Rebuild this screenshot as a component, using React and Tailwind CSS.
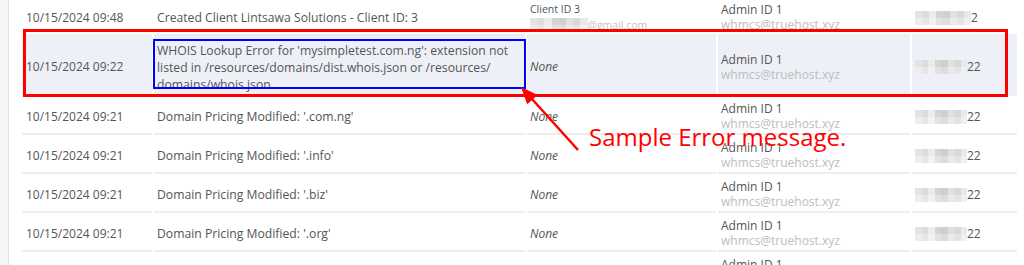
import React from 'react';

const ROWS = [
  { date: '10/15/2024 09:48', desc: ['Created Client Lintsawa Solutions - Client ID: 3'], client: true, tail: '2' },
  {
    date: '10/15/2024 09:22',
    desc: [
      "WHOIS Lookup Error for 'mysimpletest.com.ng': extension not",
      'listed in /resources/domains/dist.whois.json or /resources/',
      'domains/whois.json',
    ],
    active: true,
    tail: '22',
  },
  { date: '10/15/2024 09:21', desc: ["Domain Pricing Modified: '.com.ng'"], tail: '22' },
  { date: '10/15/2024 09:21', desc: ["Domain Pricing Modified: '.info'"], tail: '22' },
  { date: '10/15/2024 09:21', desc: ["Domain Pricing Modified: '.biz'"], tail: '22' },
  { date: '10/15/2024 09:21', desc: ["Domain Pricing Modified: '.org'"], tail: '22' },
  // next row is only peeking in at the bottom edge
  { date: '', desc: [], none: false, tail: '' },
];

const SHADES = [
  ['#e4e4e4', '#dcdcdc', '#ececec', '#d4d4d4', '#cfcfcf', '#e0e0e0', '#d8d8d8', '#e9e9e9'],
  ['#eeeeee', '#e6e6e6', '#f1f1f1', '#e2e2e2', '#dddddd', '#eaeaea', '#e4e4e4', '#f0f0f0'],
];

// pixelated block standing in for the blurred-out IP/email
const Mosaic = ({ cols = 8, cell = 7 }) => (
  <span className="inline-flex flex-col">
    {SHADES.map((row, r) => (
      <span key={r} className="flex">
        {row.slice(0, cols).map((c, i) => (
          <span key={i} className="block h-[7px]" style={{ width: cell, background: c }} />
        ))}
      </span>
    ))}
  </span>
);

const cell = 'flex items-center border-b-2 border-[#eeeeee] px-[3px] pt-[4px]';

export default function App() {
  return (
    <div className="relative flex h-[265px] w-[1024px] overflow-hidden bg-white font-['Open_Sans',sans-serif] text-[12px] text-[#555]">
      <div className="w-[9px] shrink-0 border-r border-[#e2e2e2] bg-[#f5f5f5]" />

      <div className="-mt-[3px] pl-[13px]">
        {ROWS.map((row, idx) => (
          <div
            key={idx}
            className={`grid grid-cols-[130px_371px_189px_192px_105px] gap-x-[2px] ${row.active ? 'h-[60px]' : 'h-[39px]'}`}
          >
            <div className={`${cell} pl-[4px] ${row.active ? 'bg-[#eef0f8]' : ''}`}>{row.date}</div>
            <div className={`${cell} text-[12.2px] ${row.active ? 'bg-[#eef0f8]' : ''}`}>
              <div className="leading-[17px]">
                {row.desc.map((line, i) => (
                  <div key={i}>{line}</div>
                ))}
              </div>
            </div>
            <div className={`${cell} ${row.active ? 'bg-[#eef0f8]' : ''}`}>
              {row.client ? (
                <div className="flex flex-col text-[10.5px]">
                  <span className="leading-[15px] text-[#4a5568]">Client ID 3</span>
                  <span className="flex items-center leading-[16px] text-[#c4c4c4]">
                    <Mosaic cols={8} cell={7.2} />
                    <span>@gmail.com</span>
                  </span>
                </div>
              ) : row.date ? (
                <span className="italic">None</span>
              ) : null}
            </div>
            <div className={`${cell} ${row.active ? 'bg-[#eef0f8]' : ''}`}>
              <div className="flex flex-col">
                <span className="leading-[15px]">Admin ID 1</span>
                <span className="leading-[16px] text-[#bdbdbd]">whmcs@truehost.xyz</span>
              </div>
            </div>
            <div className={`${cell} ${row.active ? 'bg-[#eef0f8]' : ''}`}>
              {row.tail && (
                <>
                  <Mosaic cols={8} cell={idx === 0 ? 7 : 6.5} />
                  <span>{row.tail}</span>
                </>
              )}
            </div>
          </div>
        ))}
      </div>

      {/* annotation overlay */}
      <svg className="pointer-events-none absolute left-0 top-0" width="1024" height="265">
        <rect x="24.5" y="30.5" width="982" height="65" fill="none" stroke="#ff0000" strokeWidth="3" />
        <rect x="154" y="40" width="371" height="48" fill="none" stroke="#0000ff" strokeWidth="2" />
        <line x1="578" y1="150" x2="532" y2="99" stroke="#ff0000" strokeWidth="2.5" />
        <polygon points="521,87 537.6,94.9 527.2,104.3" fill="#ff0000" />
      </svg>
      <div className="pointer-events-none absolute left-[589px] top-[125px] text-[24px] leading-[24px] text-[#ff0000]">
        Sample Error message.
      </div>
    </div>
  );
}
